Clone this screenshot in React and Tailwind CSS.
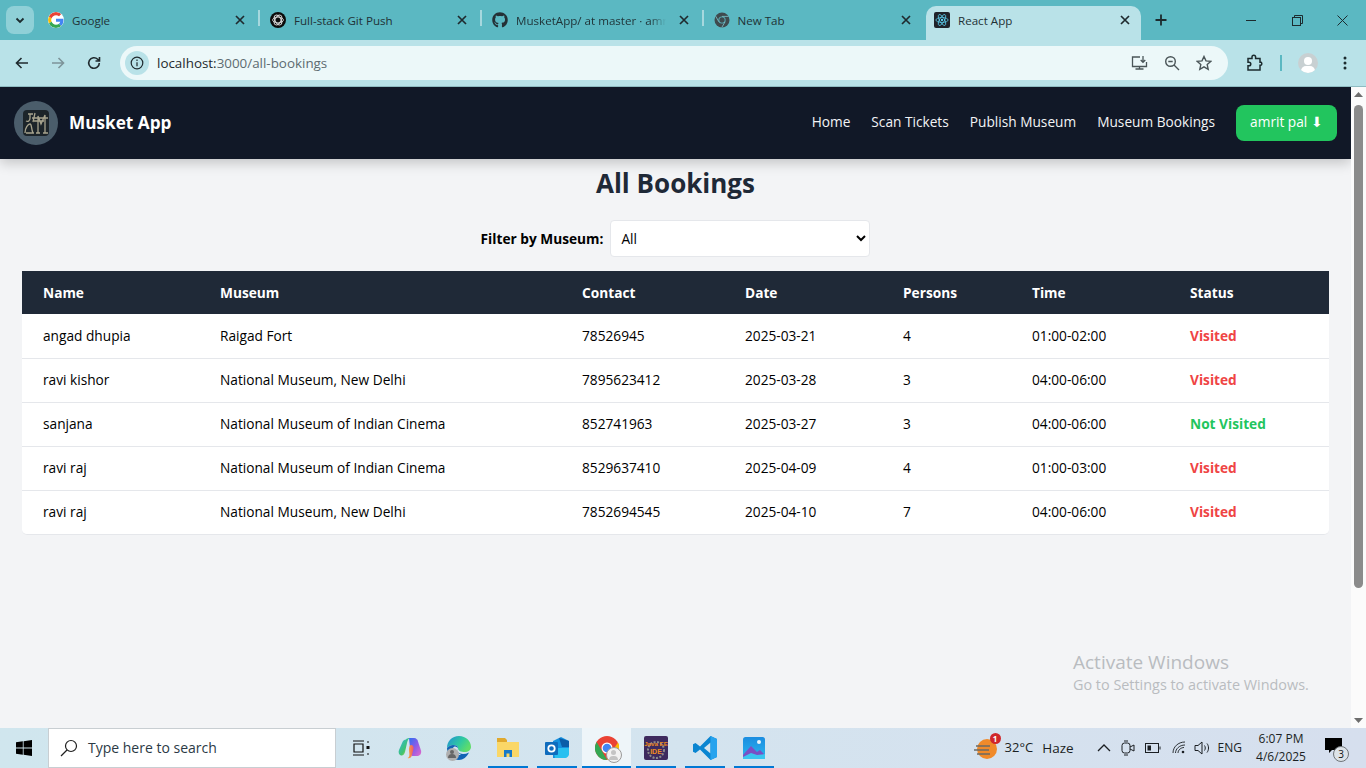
import React from "react";
import { FaGithub } from "react-icons/fa";

const font = "font-['Open_Sans','Noto_Sans',sans-serif]";

const X = ({ cls = "" }) => (
  <svg width="12" height="12" viewBox="0 0 12 12" className={cls} fill="none" stroke="#1f2a2e" strokeWidth="1.7"><path d="M2 2l8 8M10 2l-8 8" /></svg>
);

const GoogleIcon = () => (
  <svg width="16" height="16" viewBox="0 0 48 48" className="rounded-full bg-white">
    <path fill="#EA4335" d="M24 9.5c3.5 0 6.6 1.2 9.1 3.6l6.8-6.8C35.800 2.500 30.400 0 24 0 14.600 0 6.500 5.400 2.600 13.200l7.900 6.200C12.400 13.600 17.700 9.500 24 9.500z" />
    <path fill="#4285F4" d="M46.500 24.500c0-1.600-.1-3.100-.4-4.500H24v9h12.700c-.6 2.900-2.200 5.400-4.700 7.100l7.600 5.900c4.400-4.100 6.900-10.100 6.900-17.500z" />
    <path fill="#FBBC05" d="M10.500 28.600c-.5-1.400-.8-3-.8-4.600s.3-3.200.8-4.600l-7.900-6.200C.9 16.500 0 20.100 0 24s.9 7.500 2.600 10.800l7.900-6.200z" />
    <path fill="#34A853" d="M24 48c6.500 0 11.900-2.100 15.900-5.800L32.300 36.300c-2.100 1.400-4.800 2.300-8.300 2.300-6.300 0-11.600-4.100-13.500-9.800l-7.900 6.200C6.500 42.600 14.600 48 24 48z" />
  </svg>
);

const GptIcon = () => (
  <svg width="16" height="16" viewBox="0 0 16 16">
    <circle cx="8" cy="8" r="8" fill="#0b0b0b" />
    <g fill="none" stroke="#d8d8d8" strokeWidth=".9">
      <ellipse cx="8" cy="8" rx="5.400" ry="2.900" />
      <ellipse cx="8" cy="8" rx="5.400" ry="2.900" transform="rotate(60 8 8)" />
      <ellipse cx="8" cy="8" rx="5.400" ry="2.900" transform="rotate(120 8 8)" />
    </g>
  </svg>
);

const ChromeGrey = () => (
  <svg width="16" height="16" viewBox="0 0 16 16">
    <circle cx="8" cy="8" r="7.500" fill="#3f4a4e" />
    <circle cx="8" cy="8" r="3.600" fill="#5bb8c2" />
    <circle cx="8" cy="8" r="2.700" fill="#3f4a4e" />
    <path d="M8 4.400h6.500M4.900 9.800L1.700 4.200M11.100 9.800L7.800 15.400" stroke="#7fc6ce" strokeWidth=".8" />
  </svg>
);

const ReactIcon = () => (
  <div className="flex h-4 w-4 items-center justify-center rounded-[2px] bg-[#20232a]">
    <svg width="14" height="14" viewBox="0 0 16 16" fill="none" stroke="#61dafb" strokeWidth=".8">
      <ellipse cx="8" cy="8" rx="7" ry="2.800" />
      <ellipse cx="8" cy="8" rx="7" ry="2.800" transform="rotate(60 8 8)" />
      <ellipse cx="8" cy="8" rx="7" ry="2.800" transform="rotate(120 8 8)" />
      <circle cx="8" cy="8" r="1.300" fill="#61dafb" stroke="none" />
    </svg>
  </div>
);

function Tab({ icon, title, w, fade, sep = true }) {
  return (
    <div className={`relative flex h-8 shrink-0 items-center pl-[12px] pr-[12px] ${w}`}>
      {icon}
      <span className="ml-[8px] flex-1 overflow-hidden whitespace-nowrap pt-[2px] text-[11.600px] leading-[18px] text-[#1f3236]" style={fade ? { maskImage: "linear-gradient(to right,#000 85%,transparent 95%)" } : undefined}>{title}</span>
      <X cls="ml-1 shrink-0" />
      {sep && <div className="absolute right-[-2px] top-[6px] h-[16px] w-[2px] bg-[#a6d8de]" />}
    </div>
  );
}

function Chrome() {
  return (
    <div className="shrink-0">
      <div className="flex h-[40px] items-end bg-[#5bb8c2] pl-[6px]">
        <div className="mb-[6px] mr-[2px] flex h-[28px] w-[28px] shrink-0 items-center justify-center rounded-[8px] bg-[#8fd0d7]">
          <svg width="12" height="12" viewBox="0 0 12 12" fill="none" stroke="#1c2b2e" strokeWidth="1.800"><path d="M2.500 4.500L6 8l3.500-3.500" /></svg>
        </div>
        <div className="mb-0 flex items-center pb-[4px] pl-0">
          <Tab icon={<GoogleIcon />} title="Google" w="w-[222px]" />
          <Tab icon={<GptIcon />} title="Full-stack Git Push" w="w-[222px]" />
          <Tab icon={<FaGithub size={16} color="#243036" />} title="MusketApp/ at master · amri" w="w-[221.500px]" fade />
          <Tab icon={<ChromeGrey />} title="New Tab" w="w-[222.500px]" sep={false} />
        </div>
        <div className="ml-[2px] flex h-[34px] w-[215px] shrink-0 items-center rounded-t-[10px] bg-[#b9e2e8] px-[8px] pb-[6px]">
          <ReactIcon />
          <span className="ml-[8px] flex-1 pt-[1px] text-[11.600px] leading-[18px] text-[#1f3236]">React App</span>
          <X cls="mr-[2px]" />
        </div>
        <div className="flex h-[40px] flex-1 items-center">
          <svg width="14" height="14" viewBox="0 0 14 14" className="ml-[13px]" fill="none" stroke="#1c2b2e" strokeWidth="1.800"><path d="M7 1.500v11M1.500 7h11" /></svg>
          <div className="ml-auto flex items-center">
            <div className="flex w-[46px] justify-center"><div className="h-px w-[10px] bg-[#1c2b2e]" /></div>
            <div className="flex w-[46px] justify-center">
              <svg width="11" height="11" viewBox="0 0 11 11" fill="none" stroke="#1c2b2e" strokeWidth="1"><rect x=".5" y="2.500" width="8" height="8" /><path d="M2.500 2.500V.5h8v8H8.500" /></svg>
            </div>
            <div className="flex w-[46px] justify-center pr-[2px]">
              <svg width="11" height="11" viewBox="0 0 11 11" fill="none" stroke="#1c2b2e" strokeWidth="1"><path d="M.5.5l10 10M10.500.5l-10 10" /></svg>
            </div>
          </div>
        </div>
      </div>
      <div className="flex h-[47px] items-center border-b border-[#8fbcc2] bg-[#b9e2e8] pb-[1px]">
        <div className="flex w-[120px] shrink-0 items-center">
          <svg width="16" height="16" viewBox="0 0 16 16" className="ml-[14px]" fill="none" stroke="#1f2a2e" strokeWidth="1.600"><path d="M14 8H2.500M7.500 3L2.500 8l5 5" /></svg>
          <svg width="16" height="16" viewBox="0 0 16 16" className="ml-[20px]" fill="none" stroke="#7d9499" strokeWidth="1.600"><path d="M2 8h11.500M8.500 3l5 5-5 5" /></svg>
          <svg width="16" height="16" viewBox="0 0 16 16" className="ml-[20px]" fill="none" stroke="#1f2a2e" strokeWidth="1.600"><path d="M13.300 8a5.300 5.300 0 1 1-1.600-3.800L13.500 6M13.500 2v4h-4" /></svg>
        </div>
        <div className="flex h-[34px] w-[1108px] shrink-0 items-center rounded-full bg-[#ecf8f9] pl-[5px] pr-[16px]">
          <div className="flex h-[24px] w-[24px] items-center justify-center rounded-full bg-[#b9e2e8]">
            <svg width="14" height="14" viewBox="0 0 14 14" fill="none" stroke="#1f2a2e" strokeWidth="1.200"><circle cx="7" cy="7" r="5.800" /><path d="M7 6.200v4M7 3.600v1.300" /></svg>
          </div>
          <span className={`ml-[8px] pt-[1px] text-[13.400px] leading-[18px] text-[#1f2a2e] ${font}`}>localhost:<span className="text-[#5d6b70]">3000/all-bookings</span></span>
          <div className="ml-auto flex items-center gap-[16px]">
            <svg width="17" height="16" viewBox="0 0 17 16" fill="none" stroke="#4a5558" strokeWidth="1.300"><path d="M9 2H1.500v9.500h14V7M4.500 14h8M8.500 11.500V14M12 1v6M9.700 5l2.300 2.300L14.300 5" /></svg>
            <svg width="16" height="16" viewBox="0 0 16 16" fill="none" stroke="#4a5558" strokeWidth="1.400"><circle cx="6.500" cy="6.500" r="4.800" /><path d="M10 10l5 5M4.300 6.500h4.400" /></svg>
            <svg width="16" height="16" viewBox="0 0 16 16" fill="none" stroke="#4a5558" strokeWidth="1.400"><path d="M8 1.500l2 4.400 4.700.5-3.500 3.200 1 4.700L8 11.900l-4.200 2.400 1-4.700L1.300 6.400 6 5.900z" /></svg>
          </div>
        </div>
        <div className="flex flex-1 items-center">
          <svg width="18" height="18" viewBox="0 0 18 18" className="ml-[18px]" fill="none" stroke="#1c2b2e" strokeWidth="1.500"><path d="M2 4.500h4V3a1.800 1.800 0 0 1 3.600 0v1.500h4.400v3.700h1a1.800 1.800 0 0 1 0 3h-1v4.800H2v-4.200h1a1.800 1.800 0 0 0 0-3.600H2z" /></svg>
          <div className="ml-[16px] h-[16px] w-[2px] bg-[#5bb8c2]" />
          <div className="relative ml-[16px] h-[20px] w-[20px] overflow-hidden rounded-full bg-[#c8d0d2]">
            <div className="absolute left-[6px] top-[4px] h-[8px] w-[8px] rounded-full bg-white" />
            <div className="absolute left-[3px] top-[13px] h-[10px] w-[14px] rounded-full bg-white" />
          </div>
          <svg width="4" height="16" viewBox="0 0 4 16" className="ml-[25px]" fill="#1c2b2e"><circle cx="2" cy="3" r="1.500" /><circle cx="2" cy="8" r="1.500" /><circle cx="2" cy="13" r="1.500" /></svg>
        </div>
      </div>
    </div>
  );
}

function Logo() {
  return (
    <div className="flex h-[44px] w-[44px] items-center justify-center rounded-full bg-[#4b5d6b]">
      <div className="flex h-[26px] w-[26px] items-center justify-center rounded-[4px] bg-[#1c2429]">
        <svg width="26" height="26" viewBox="0 0 26 26" fill="none" stroke="#a8a48e" strokeWidth="1.300">
          <path d="M3 11c2 1 4 0 4-3V4M5 4h5M12 3L10 12M2 23c0-5 3-9 5-9s1 5 3 9M3 23h8M15 23V6l3 8 4-9v18M13 23h4M20 23h5M9 8h16M11 11h10" />
        </svg>
      </div>
    </div>
  );
}

const rows = [
  ["angad dhupia", "Raigad Fort", "78526945", "2025-03-21", "4", "01:00-02:00", "Visited"],
  ["ravi kishor", "National Museum, New Delhi", "7895623412", "2025-03-28", "3", "04:00-06:00", "Visited"],
  ["sanjana", "National Museum of Indian Cinema", "852741963", "2025-03-27", "3", "04:00-06:00", "Not Visited"],
  ["ravi raj", "National Museum of Indian Cinema", "8529637410", "2025-04-09", "4", "01:00-03:00", "Visited"],
  ["ravi raj", "National Museum, New Delhi", "7852694545", "2025-04-10", "7", "04:00-06:00", "Visited"],
];
const heads = ["Name", "Museum", "Contact", "Date", "Persons", "Time", "Status"];

function Page() {
  return (
    <div className={`relative min-w-0 flex-1 overflow-hidden bg-[#f3f4f6] ${font}`}>
      <nav className="relative z-10 flex h-[72px] items-center bg-[#111827] pl-[14px] pr-[14px] shadow-[0_4px_12px_rgba(0,0,0,0.2)]">
        <Logo />
        <span className="ml-[11px] pb-[1px] text-[17.200px] font-bold text-white">Musket App</span>
        <div className="ml-auto flex items-center gap-[21px] text-[13.700px] text-[#f3f4f6]">
          <span className="pb-[1px]">Home</span>
          <span className="pb-[1px]">Scan Tickets</span>
          <span className="pb-[1px]">Publish Museum</span>
          <span className="pb-[1px]">Museum Bookings</span>
          <div className="flex h-[36px] w-[101px] items-center justify-center rounded-lg bg-[#22c55e] pb-[1px] text-white">amrit pal ⬇</div>
        </div>
      </nav>
      <h1 className="mt-[7px] text-center text-[26px] font-bold leading-[34px] text-[#1f2937]">All Bookings</h1>
      <div className="mt-[20px] flex h-[37px] items-center justify-center gap-[7px]">
        <span className="pt-[1px] text-[13.700px] font-bold text-black">Filter by Museum:</span>
        <select className="h-[37px] w-[260px] rounded-[4px] border border-[#e5e7eb] bg-white px-[6px] text-[13.700px] text-black">
          <option>All</option>
        </select>
      </div>
      <div className="mx-[22px] mt-[14px] overflow-hidden rounded-b-[5px] border-b border-[#e5e7eb] bg-white">
        <table className="w-[1307px] table-fixed border-collapse text-left text-[13.700px] text-black">
          <colgroup>
            <col className="w-[177px]" /><col className="w-[362px]" /><col className="w-[163px]" /><col className="w-[158px]" /><col className="w-[129px]" /><col className="w-[158px]" /><col className="w-[160px]" />
          </colgroup>
          <thead>
            <tr className="h-[43px] bg-[#1f2937] text-white">
              {heads.map((h) => <th key={h} className="px-[21px] pt-[1px] font-bold">{h}</th>)}
            </tr>
          </thead>
          <tbody>
            {rows.map((r, i) => (
              <tr key={i} className="h-[44.200px] border-b border-[#e5e7eb] last:h-[43.400px] last:border-b-0">
                {r.map((c, j) => (
                  <td key={j} className={`px-[21px] ${j === 6 ? (c === "Visited" ? "font-bold text-[#ef4444]" : "font-bold text-[#22c55e]") : ""}`}>{c}</td>
                ))}
              </tr>
            ))}
          </tbody>
        </table>
      </div>
      <div className="pointer-events-none absolute left-[1073px] top-[563px] text-[#b9bcc0]">
        <div className="text-[19px] leading-[24px]">Activate Windows</div>
        <div className="text-[14.400px] leading-[22px]">Go to Settings to activate Windows.</div>
      </div>
    </div>
  );
}

function Scrollbar() {
  return (
    <div className="flex w-[15px] shrink-0 flex-col items-center bg-[#fbfbfb]">
      <svg width="9" height="5" viewBox="0 0 9 5" className="mt-[5px]" fill="#6d6d6d"><path d="M4.500 0L9 5H0z" /></svg>
      <div className="mt-[8px] h-[483px] w-[9px] rounded-full bg-[#8b8b8b]" />
      <svg width="9" height="5" viewBox="0 0 9 5" className="mt-auto mb-[5px]" fill="#6d6d6d"><path d="M4.500 5L9 0H0z" /></svg>
    </div>
  );
}

const under = "absolute bottom-0 left-0 right-0 h-[2px] bg-[#0078d4]";
function TB({ active, line, children }) {
  return (
    <div className={`relative flex h-[40px] w-[49.200px] shrink-0 items-center justify-center ${active ? "bg-[#eef5f9]" : ""}`}>
      {children}
      {line && <div className={`${under} ${active ? "" : "mx-[4.500px]"}`} />}
    </div>
  );
}

function Taskbar() {
  return (
    <div className={`flex h-[40px] shrink-0 items-center bg-gradient-to-r from-[#d0e6ee] via-[#d4e4ef] to-[#d6dfee] ${font}`}>
      <div className="flex w-[48px] justify-center">
        <svg width="16" height="16" viewBox="0 0 16 16" fill="#000"><path d="M0 2.300l6.800-1v6.300H0zM7.600 1.200L16 0v7.600H7.600zM0 8.400h6.800v6.300l-6.800-1zM7.600 8.400H16V16l-8.400-1.200z" /></svg>
      </div>
      <div className="flex h-[40px] w-[288px] shrink-0 items-center border border-[#c8ced2] bg-white pl-[11px]">
        <svg width="18" height="18" viewBox="0 0 18 18" fill="none" stroke="#1f1f1f" strokeWidth="1.200"><circle cx="11" cy="7" r="5.500" /><path d="M7 11l-6 6" /></svg>
        <span className="ml-[10px] text-[14px] leading-[20px] text-[#2b3a45]">Type here to search</span>
      </div>
      <TB>
        <svg width="18" height="16" viewBox="0 0 18 16" fill="none" stroke="#111" strokeWidth="1.200"><path d="M1 1h11M1 15h11M2 4h9v8H2zM15 2h2M15 14h2" /><rect x="14.500" y="6" width="3" height="3" fill="#111" stroke="none" /></svg>
      </TB>
      <TB>
        <svg width="24" height="24" viewBox="0 0 24 24">
          <defs>
            <linearGradient id="cp1" x1="0" y1="0" x2="1" y2="1"><stop offset="0" stopColor="#2fb4ee" /><stop offset=".6" stopColor="#3fc46f" /><stop offset="1" stopColor="#f5d23c" /></linearGradient>
            <linearGradient id="cp2" x1="0" y1="0" x2="1" y2="1"><stop offset="0" stopColor="#2f6ff0" /><stop offset=".5" stopColor="#8a5ce8" /><stop offset="1" stopColor="#e868c8" /></linearGradient>
            <linearGradient id="cp3" x1="0" y1="0" x2="1" y2="0"><stop offset="0" stopColor="#f8b23a" /><stop offset="1" stopColor="#f0566a" /></linearGradient>
          </defs>
          <path fill="url(#cp2)" d="M11 2h5c2.500 0 3.500 2 4 3.500l3 9c.8 3-1 5.500-4 5.500h-5l-2-8z" />
          <path fill="url(#cp1)" d="M8 3.500C8.600 2.500 10 2 11.500 2c-1.500 1-2 3-2.500 5l-2 9c-.5 2-2 4-4 3.500C1 19 0 16.500 1 14l3.500-8C5 4.500 6.500 3.500 8 3.500z" />
          <path fill="url(#cp3)" d="M13 9c2 0 3 2 2.500 4L14 19c-.5 2-2 4-4.500 3 3-1 1.500-5 1.500-8 0-2 .5-5 2-5z" />
        </svg>
      </TB>
      <TB>
        <div className="relative h-[24px] w-[24px]">
          <svg width="24" height="24" viewBox="0 0 24 24">
            <defs><linearGradient id="ed" x1="0" y1="0" x2="1" y2=".5"><stop offset="0" stopColor="#1f8ed8" /><stop offset=".6" stopColor="#2fc9a0" /><stop offset="1" stopColor="#5fdc6a" /></linearGradient></defs>
            <path d="M12 0c7 0 12 5 12 11 0 3-3 5-6 5-4 0-7-1-7-4 0-2-2-3-5-3-2 0-4 1-6 3C0 5 5 0 12 0z" fill="url(#ed)" />
            <path d="M0 12c2-2 4-3 6-3 3 0 5 1 5 3-2 3 1 6 5 6 2 0 4-.5 6-1.500C20 21 16 24 12 24 5 24 0 19 0 12z" fill="#1264b4" />
            <path d="M6 12c1-2 3-2 5 0-1 3 0 5 3 7-4 .5-8-3-8-7z" fill="#d4e4ef" />
          </svg>
          <div className="absolute bottom-[-1px] left-[-1px] h-[13px] w-[13px] rounded-full bg-[#b0b0b0]">
            <div className="mx-auto mt-[2px] h-[4px] w-[4px] rounded-full bg-[#666]" />
            <div className="mx-auto h-[4px] w-[8px] rounded-t-full bg-[#666]" />
          </div>
        </div>
      </TB>
      <TB line>
        <svg width="22" height="20" viewBox="0 0 22 20">
          <path d="M0 0h8l2 2h0v4H0z" fill="#e0a92e" />
          <path d="M0 4h22v15H0z" fill="#fad767" />
          <path d="M7 12h8v7h-2.500v-3.500h-3V19H7z" fill="#1679c9" />
        </svg>
      </TB>
      <TB line>
        <svg width="24" height="22" viewBox="0 0 24 22">
          <path d="M8 4l8-4 8 4v13l-4 4H8z" fill="#1490df" />
          <path d="M14 1l10 3v6h-7z" fill="#0a5da8" />
          <path d="M8 11h16v6c0 2-2 4-4 4H10z" fill="#28c0f0" />
          <rect x="0" y="5" width="13" height="13" rx="1" fill="#0f6cbd" />
          <circle cx="6.500" cy="11.500" r="3.200" fill="none" stroke="#fff" strokeWidth="1.800" />
        </svg>
      </TB>
      <TB active line>
        <div className="relative h-[24px] w-[24px]">
          <svg width="24" height="24" viewBox="0 0 24 24">
            <circle cx="12" cy="12" r="12" fill="#ea4335" />
            <path d="M12 24A12 12 0 0 1 1.600 6L7 15l5 9z" fill="#34a853" />
            <path d="M12 24l5.500-9.500L23 6.500A12 12 0 0 1 12 24z" fill="#fbbc05" />
            <circle cx="12" cy="12" r="5.500" fill="#fff" />
            <circle cx="12" cy="12" r="4.300" fill="#4285f4" />
          </svg>
          <div className="absolute bottom-[-3px] right-[-3px] h-[16px] w-[16px] rounded-full border border-[#9a9a9a] bg-[#f2f2f2]">
            <div className="mx-auto mt-[2px] h-[5px] w-[5px] rounded-full bg-[#c4c4c4]" />
            <div className="mx-auto mt-[1px] h-[4px] w-[9px] rounded-t-full bg-[#c4c4c4]" />
          </div>
        </div>
      </TB>
      <TB line>
        <svg width="24" height="24" viewBox="0 0 24 24">
          <rect width="24" height="24" rx="2" fill="#3e2a5e" />
          <circle cx="12" cy="14" r="8" fill="none" stroke="#8d8d8d" strokeWidth="2" strokeDasharray="2 1.500" />
          <text x="12" y="10" textAnchor="middle" fontSize="6.200" fontWeight="700" fill="#f08a1d" fontFamily="Liberation Sans">Java EE</text>
          <text x="12" y="18" textAnchor="middle" fontSize="7" fontWeight="700" fill="#f08a1d" fontFamily="Liberation Sans">IDE</text>
        </svg>
      </TB>
      <TB line>
        <svg width="24" height="24" viewBox="0 0 24 24">
          <path d="M17.500 0L24 3v18l-6.500 3L7 13.500 2.500 17 0 15.800V8.200L2.500 7 7 10.500z" fill="#0a85d1" />
          <path d="M17.500 6.500L11 12l6.500 5.500z" fill="#d4e4ef" />
          <path d="M17.500 0L24 3v18l-6.500 3z" fill="#27a3ee" />
        </svg>
      </TB>
      <TB line>
        <svg width="22" height="22" viewBox="0 0 22 22">
          <defs><linearGradient id="ph" x1="0" y1="0" x2="0" y2="1"><stop offset="0" stopColor="#1b8de0" /><stop offset="1" stopColor="#2bb5ef" /></linearGradient></defs>
          <rect width="22" height="22" rx="2.500" fill="url(#ph)" />
          <circle cx="16" cy="5" r="2" fill="#e8f4fb" />
          <path d="M0 18l8-9 6 6 3-2 5 5v2H0z" fill="#7b4fc4" />
          <path d="M0 20l8-4 6 2 8-1v5H0z" fill="#3bc5f0" />
        </svg>
      </TB>
      <div className="ml-auto flex h-[40px] items-center text-[#1b1f23]">
        <div className="relative mr-[7px] h-[22px] w-[24px]">
          <svg width="24" height="22" viewBox="0 0 24 22">
            <circle cx="13" cy="12" r="10" fill="#f08a2a" />
            <path d="M2 9h14M0 13h15M3 17h13" stroke="#6b6b66" strokeWidth="1.500" />
          </svg>
          <div className="absolute right-[-3px] top-[-4px] flex h-[11px] w-[11px] items-center justify-center rounded-full bg-[#d0262b] text-[8px] font-bold text-white">1</div>
        </div>
        <span className="text-[13px]">32°C</span>
        <span className="ml-[9px] text-[13.500px]">Haze</span>
        <svg width="14" height="8" viewBox="0 0 14 8" className="ml-[23px]" fill="none" stroke="#1b1f23" strokeWidth="1.300"><path d="M1 7l6-6 6 6" /></svg>
        <svg width="14" height="16" viewBox="0 0 14 16" className="ml-[10px]" fill="none" stroke="#1b1f23" strokeWidth="1"><rect x="1" y="3" width="8" height="10" rx="2.500" /><path d="M9 7l4-2v6l-4-2M3 1h4M3 15h4" /></svg>
        <svg width="16" height="10" viewBox="0 0 16 10" className="ml-[10px]" fill="none" stroke="#1b1f23" strokeWidth="1"><rect x=".5" y=".5" width="13" height="9" /><rect x="2.500" y="2.500" width="3.500" height="5" fill="#1b1f23" stroke="none" /><path d="M15 3.500v3" /></svg>
        <svg width="14" height="14" viewBox="0 0 14 14" className="ml-[11px]" fill="none" stroke="#1b1f23" strokeWidth=".9"><path d="M1 12C1 6 6 1 13 1M3.500 12c0-4 4-8 9.500-8M6 12c0-3 3-5.500 6-5.500" /><circle cx="11" cy="11" r="1.300" fill="#1b1f23" stroke="none" /></svg>
        <svg width="16" height="14" viewBox="0 0 16 14" className="ml-[8px]" fill="none" stroke="#1b1f23" strokeWidth="1"><path d="M1 4.500h3L8 1v12L4 9.500H1zM10.500 4.500c1 1.500 1 3.500 0 5M13 2.500c2 2.500 2 6.500 0 9" /></svg>
        <span className="ml-[8px] text-[12px]">ENG</span>
        <div className="ml-[16px] flex w-[46px] flex-col items-center text-[12px] leading-[18px]">
          <span>6:07 PM</span>
          <span>4/6/2025</span>
        </div>
        <div className="relative ml-[21px] mr-[19px] h-[22px] w-[22px]">
          <svg width="17" height="16" viewBox="0 0 17 16" className="mt-[1px]" fill="#000"><path d="M0 0h17v12H7l-3 3v-3H0z" /></svg>
          <div className="absolute bottom-[-3px] right-[-2px] flex h-[16px] w-[16px] items-center justify-center rounded-full border border-[#6f7478] bg-[#dde3e8] text-[10px] text-[#111]">3</div>
        </div>
      </div>
    </div>
  );
}

export default function App() {
  return (
    <div className={`flex h-[768px] w-[1366px] flex-col overflow-hidden ${font}`}>
      <Chrome />
      <div className="flex min-h-0 flex-1">
        <Page />
        <Scrollbar />
      </div>
      <Taskbar />
    </div>
  );
}
